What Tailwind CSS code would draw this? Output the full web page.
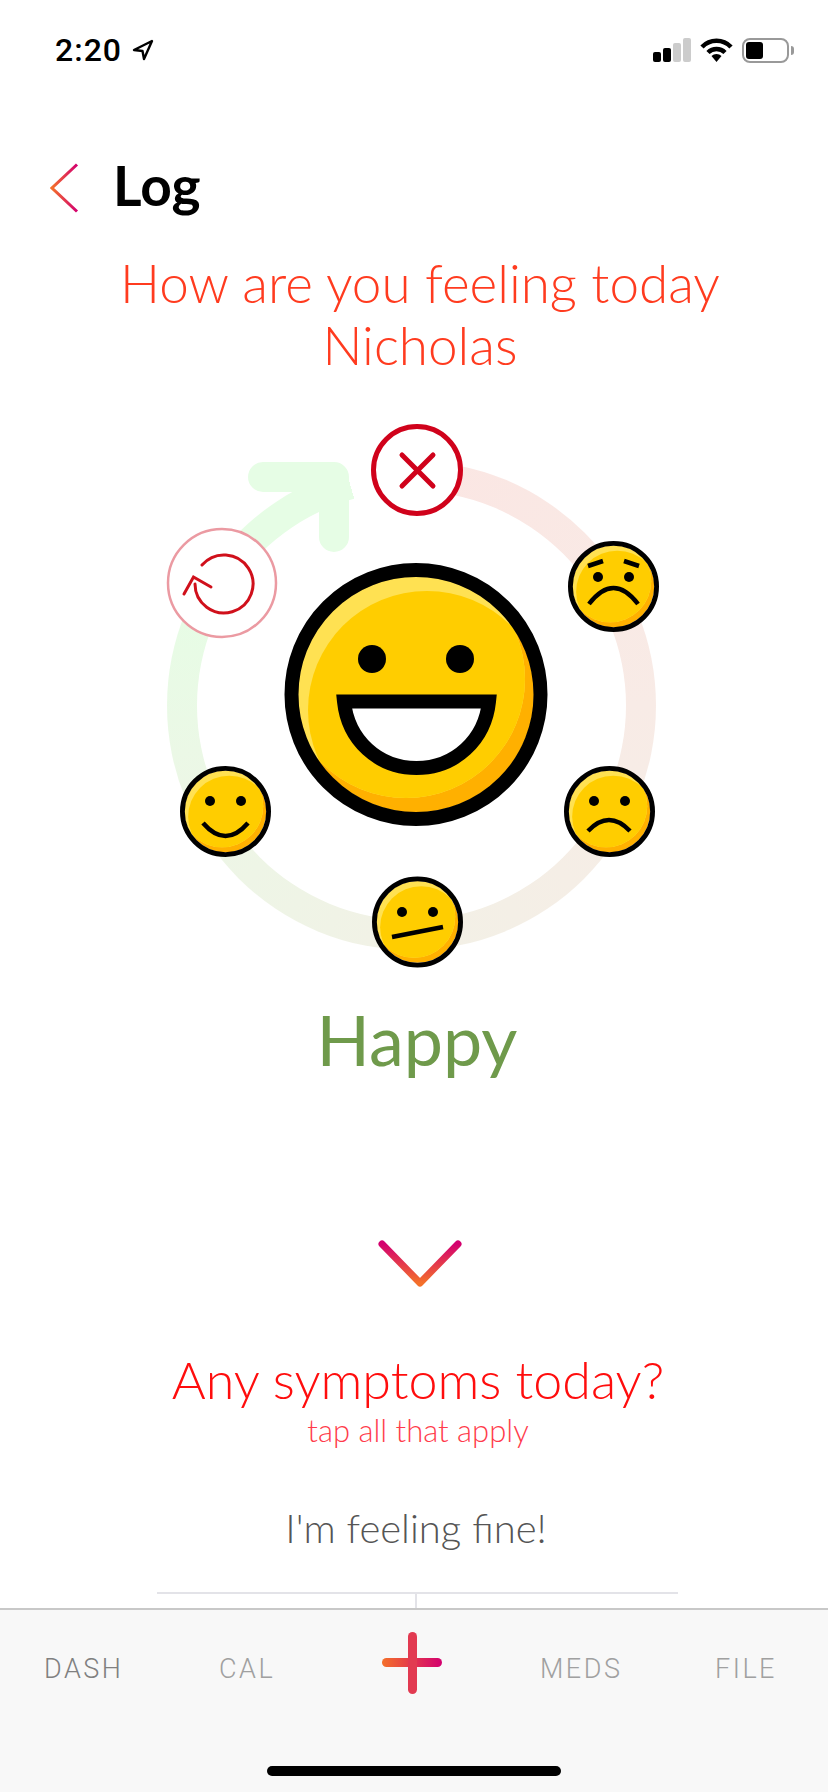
<!DOCTYPE html>
<html>
<head>
<meta charset="utf-8">
<script src="https://cdn.jsdelivr.net/npm/@tailwindcss/browser@4"></script>
</head>
<body class="bg-white">
<div class="w-[828px] h-[1792px] flex flex-col overflow-hidden bg-white font-['Lato',sans-serif]">
  <main class="flex-1 min-h-0 flex flex-col items-center overflow-hidden">
    <!-- status bar -->
    <div class="w-full h-[99px] pt-[33px] pl-[55px] pr-[34px] flex justify-between items-start shrink-0">
      <div class="flex items-center gap-[10px] h-[34px]">
        <span class="font-['Roboto',sans-serif] font-medium text-[32px] leading-[34px] tracking-[1px] text-black">2:20</span>
        <svg width="22" height="22" viewBox="0 0 22 22"><path d="M20 2 L2 11 L10.5 12 L12 20 Z" fill="none" stroke="#000" stroke-width="2.4" stroke-linejoin="round"/></svg>
      </div>
      <div class="flex items-center h-[34px]">
        <div class="flex items-end gap-[2px] h-[24px]">
          <span class="w-[8px] h-[10px] rounded-[2px] bg-black"></span>
          <span class="w-[8px] h-[14px] rounded-[2px] bg-black"></span>
          <span class="w-[8px] h-[19px] rounded-[2px] bg-[#cccccc]"></span>
          <span class="w-[8px] h-[24px] rounded-[2px] bg-[#cccccc]"></span>
        </div>
        <svg class="ml-[9px]" width="33" height="24" viewBox="0 0 33 24"><path d="M2 9 A20 20 0 0 1 31 9" fill="none" stroke="#000" stroke-width="4.5"/><path d="M8 14.500 A12 12 0 0 1 25 14.500" fill="none" stroke="#000" stroke-width="4.500"/><path d="M11.500 18 L16.500 24 L21.500 18 A7 7 0 0 0 11.500 18 Z" fill="#000"/></svg>
        <div class="ml-[9px] w-[47px] h-[25px] rounded-[8px] border-2 border-[#999999] p-[2px] flex">
          <span class="w-[17px] h-full rounded-[3px] bg-black"></span>
        </div>
        <span class="ml-[2px] w-[3px] h-[9px] rounded-r-[3px] bg-[#999999]"></span>
      </div>
    </div>
    <!-- header -->
    <div class="w-full h-[153px] pl-[50px] flex items-start shrink-0">
      <svg class="mt-[64px]" width="30" height="50" viewBox="0 0 30 50">
        <defs><linearGradient id="gb" x1="0" y1="0" x2="1" y2="0"><stop offset="0" stop-color="#f4702a"/><stop offset="1" stop-color="#d3006f"/></linearGradient></defs>
        <path d="M27 1.500 L2 25 L27 48.500" fill="none" stroke="url(#gb)" stroke-width="3"/>
      </svg>
      <span class="ml-[33px] mt-[55px] font-bold text-[55px] leading-[62px] text-black">Log</span>
    </div>
    <!-- heading -->
    <h1 class="text-center font-light text-[53px] leading-[62px] text-[#ff3b1f] shrink-0 w-full pl-[12px]">How are you feeling today<br>Nicholas</h1>
    <!-- mood diagram -->
    <div class="relative w-full h-[590px] shrink-0 mt-[24px]">
      <div class="absolute left-[167px] top-[60.5px] w-[489px] h-[489px] rounded-full bg-[conic-gradient(#fbe6e3_0deg,#f8ebe6_90deg,#f3f0e6_170deg,#eff4e6_210deg,#ecf7e6_250deg,#e6fde5_300deg,#e6fde5_344.5deg,#ffffff_344.5deg,#ffffff_360deg)]"></div>
      <div class="absolute left-[197px] top-[90.5px] w-[429px] h-[429px] rounded-full bg-white"></div>
      <svg class="absolute left-0 top-0" width="828" height="590" viewBox="0 400 828 590">
        <defs>
          <clipPath id="inner"><circle r="118"/></clipPath>
          <clipPath id="lit"><circle cx="-10" cy="-15.500" r="119"/></clipPath>
          <g id="face">
            <circle r="118" fill="#ffb000"/>
            <g clip-path="url(#inner)">
              <circle cx="-10" cy="-15.500" r="119" fill="#ffe152"/>
              <g clip-path="url(#lit)"><circle cx="11" cy="15.500" r="119" fill="#ffcd00"/></g>
            </g>
            <circle r="124.500" fill="none" stroke="#000" stroke-width="14"/>
          </g>
        </defs>
        <path d="M263 477 H334 V537" fill="none" stroke="#e6fde5" stroke-width="30" stroke-linecap="round" stroke-linejoin="round"/>
        <!-- close -->
        <circle cx="417" cy="470" r="43.500" fill="#fff" stroke="#d0021b" stroke-width="5"/>
        <path d="M402 455 L433 486 M433 455 L402 486" stroke="#d0021b" stroke-width="5" stroke-linecap="round"/>
        <!-- reset -->
        <circle cx="222" cy="583" r="54" fill="#fff" stroke="#eb9aa2" stroke-width="2.500"/>
        <path d="M202 565 A29 29 0 1 1 195 584" fill="none" stroke="#d0101b" stroke-width="3" stroke-linecap="round"/>
        <path d="M184 594 L193.500 577 L211 587" fill="none" stroke="#d0101b" stroke-width="3" stroke-linecap="round"/>
        <!-- big happy -->
        <g transform="translate(416 694.500)">
          <use href="#face"/>
          <circle cx="-44" cy="-35.500" r="14"/>
          <circle cx="44" cy="-35.500" r="14"/>
        </g>
        <path d="M344 701.500 H489 C485 740 455 768 416.500 768 C378 768 348 740 344 701.500 Z" fill="#fff" stroke="#000" stroke-width="14"/>
        <!-- worried -->
        <use href="#face" transform="translate(613.500 586.500) scale(.346)"/>
        <circle cx="598" cy="577" r="5"/><circle cx="629" cy="577" r="5"/>
        <path d="M588 566 L603 561 M624 561 L639 566" stroke="#000" stroke-width="4.500"/>
        <path d="M589 604 Q613.500 572 638 604" fill="none" stroke="#000" stroke-width="4.500"/>
        <!-- sad -->
        <use href="#face" transform="translate(609.500 811.500) scale(.346)"/>
        <circle cx="594" cy="801" r="5"/><circle cx="625" cy="801" r="5"/>
        <path d="M588 831 Q609 809 630 831" fill="none" stroke="#000" stroke-width="4.500"/>
        <!-- smile -->
        <use href="#face" transform="translate(225.500 811.500) scale(.346)"/>
        <circle cx="210" cy="801" r="5"/><circle cx="241" cy="801" r="5"/>
        <path d="M203 823 Q225.500 849 248 823" fill="none" stroke="#000" stroke-width="4.500"/>
        <!-- neutral -->
        <use href="#face" transform="translate(417.500 922) scale(.346)"/>
        <circle cx="402" cy="912" r="5"/><circle cx="433" cy="912" r="5"/>
        <path d="M392 937 L443 927" stroke="#000" stroke-width="4.500"/>
      </svg>
    </div>
    <div class="shrink-0 text-center text-[70px] leading-[86px] text-[#6f9a4b] font-normal pl-[6px] mt-[6px]">Happy</div>
    <svg class="shrink-0 mt-[157px] ml-[12px]" width="84" height="50" viewBox="0 0 84 50">
      <defs><linearGradient id="gd" x1="0" y1="0" x2="0" y2="1"><stop offset="0" stop-color="#d3006f"/><stop offset="1" stop-color="#f4702a"/></linearGradient></defs>
      <path d="M4 5 L42 44 L80 5" fill="none" stroke="url(#gd)" stroke-width="7" stroke-linecap="round" stroke-linejoin="round"/>
    </svg>
    <div class="shrink-0 mt-[60px] pl-[8px] text-center font-light text-[52px] leading-[60px] text-[#ff0d0d]">Any symptoms today?</div>
    <div class="shrink-0 mt-[3px] pl-[8px] text-center font-light text-[31px] leading-[36px] text-[#ff3b4b]">tap all that apply</div>
    <div class="shrink-0 mt-[56px] pl-[4px] text-center font-light text-[40px] leading-[48px] text-[#555555]">I'm feeling fine!</div>
    <div class="shrink-0 mt-[40px] w-[521px] h-[2px] bg-[#e3e3e8] ml-[7px]"></div>
    <div class="shrink-0 w-[2px] flex-1 bg-[#e3e3e8] ml-[4px]"></div>
  </main>
  <!-- tab bar -->
  <nav class="shrink-0 h-[184px] bg-[#f8f8f8] border-t-2 border-[#c8c8c8] relative font-['Roboto',sans-serif] font-light text-[27px] leading-[30px] tracking-[2.5px]">
    <div class="flex items-start pt-[22px] h-[100px]">
      <div class="w-[164px] pl-[44px] pt-[22px] text-[#808080]">DASH</div>
      <div class="w-[182px] pl-[55px] pt-[22px] text-[#a0a0a0]">CAL</div>
      <div class="w-[194px] pl-[36px]">
        <svg width="60" height="62" viewBox="0 0 60 62">
          <defs><linearGradient id="gp" x1="0" y1="0" x2="1" y2="0"><stop offset="0" stop-color="#f4702a"/><stop offset="1" stop-color="#d3006f"/></linearGradient></defs>
          <rect x="0" y="26" width="60" height="9" rx="4.500" fill="url(#gp)"/>
          <rect x="26" y="0" width="9" height="62" rx="4.500" fill="#e23a51"/>
        </svg>
      </div>
      <div class="w-[175px] pt-[22px] text-[#a0a0a0]">MEDS</div>
      <div class="pt-[22px] text-[#a0a0a0]">FILE</div>
    </div>
    <div class="absolute left-[267px] top-[156px] w-[294px] h-[10px] rounded-full bg-black"></div>
  </nav>
</div>
</body>
</html>
